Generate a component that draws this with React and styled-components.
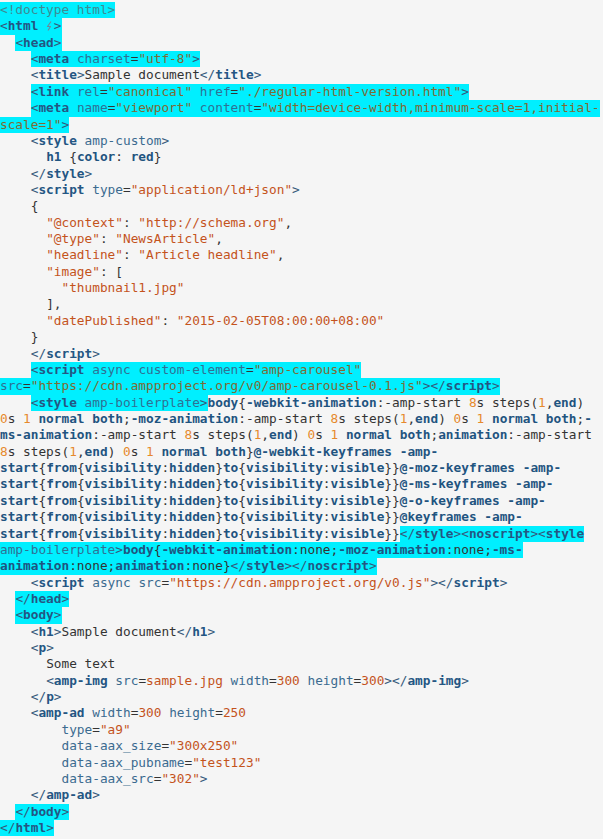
import React from 'react'
import styled, { createGlobalStyle } from 'styled-components'

const GlobalStyle = createGlobalStyle`
  html, body {
    margin: 0;
    padding: 0;
    background: #f5f5f5;
  }
`

const colors = {
    b: '#34597b',
    t: '#245683',
    a: '#3b6b90',
    v: '#c4531c',
    p: '#333333',
    k: '#1f5480',
    n: '#e6892c',
    d: '#4a8e97',
    i: '#6f8799'
}
const markColors = { ...colors, v: '#7f6a34', a: '#2f7194', d: '#3f8a93' }

const plainWords = new Set(['-amp-start', 'steps', 's', 'none'])

// split a run of css into coloured tokens
const css = (text, hl) =>
    text.match(/\d+|[@A-Za-z-][A-Za-z0-9-]*|[^@A-Za-z0-9-]+/g).map(w => {
        let type = 'k'
        if (/^\d+$/.test(w)) type = 'n'
        else if (!/^[@A-Za-z-]/.test(w) || plainWords.has(w)) type = 'p'
        return `${hl ? '!' : ''}${type}:${w}`
    })

const kf = 'start{from{visibility:hidden}to{visibility:visible}}'

const LINES = [
    [0, '!d:<!doctype html>'],
    [0, '!b:<', '!t:html', '!p: ', '!i:', '!b:>'],
    [2, '!b:<', '!t:head', '!b:>'],
    [4, '!b:<', '!t:meta', '!p: ', '!a:charset', '!p:=', '!v:"utf-8"', '!b:>'],
    [4, 'b:<', 't:title', 'b:>', 'p:Sample document', 'b:</', 't:title', 'b:>'],
    [4, '!b:<', '!t:link', '!p: ', '!a:rel', '!p:=', '!v:"canonical"', '!p: ', '!a:href', '!p:=', '!v:"./regular-html-version.html"', '!b:>'],
    [4, '!b:<', '!t:meta', '!p: ', '!a:name', '!p:=', '!v:"viewport"', '!p: ', '!a:content', '!p:=', '!v:"width=device-width,minimum-scale=1,initial-'],
    [0, '!v:scale=1"', '!b:>'],
    [4, 'b:<', 't:style', 'p: ', 'a:amp-custom', 'b:>'],
    [6, 'k:h1', 'p: {', 'k:color', 'p:: ', 'k:red', 'p:}'],
    [4, 'b:</', 't:style', 'b:>'],
    [4, 'b:<', 't:script', 'p: ', 'a:type', 'p:=', 'v:"application/ld+json"', 'b:>'],
    [4, 'p:{'],
    [6, 'v:"@context"', 'p:: ', 'v:"http://schema.org"', 'p:,'],
    [6, 'v:"@type"', 'p:: ', 'v:"NewsArticle"', 'p:,'],
    [6, 'v:"headline"', 'p:: ', 'v:"Article headline"', 'p:,'],
    [6, 'v:"image"', 'p:: ['],
    [8, 'v:"thumbnail1.jpg"'],
    [6, 'p:],'],
    [6, 'v:"datePublished"', 'p:: ', 'v:"2015-02-05T08:00:00+08:00"'],
    [4, 'p:}'],
    [4, 'b:</', 't:script', 'b:>'],
    [4, '!b:<', '!t:script', '!p: ', '!a:async', '!p: ', '!a:custom-element', '!p:=', '!v:"amp-carousel"'],
    [0, '!a:src', '!p:=', '!v:"https://cdn.ampproject.org/v0/amp-carousel-0.1.js"', '!b:></', '!t:script', '!b:>'],
    [4, '!b:<', '!t:style', '!p: ', '!a:amp-boilerplate', '!b:>', ...css('body{-webkit-animation:-amp-start 8s steps(1,end)')],
    [0, ...css('0s 1 normal both;-moz-animation:-amp-start 8s steps(1,end) 0s 1 normal both;-')],
    [0, ...css('ms-animation:-amp-start 8s steps(1,end) 0s 1 normal both;animation:-amp-start')],
    [0, ...css('8s steps(1,end) 0s 1 normal both}@-webkit-keyframes -amp-')],
    [0, ...css(kf + '@-moz-keyframes -amp-')],
    [0, ...css(kf + '@-ms-keyframes -amp-')],
    [0, ...css(kf + '@-o-keyframes -amp-')],
    [0, ...css(kf + '@keyframes -amp-')],
    [0, ...css(kf), '!b:</', '!t:style', '!b:><', '!t:noscript', '!b:><', '!t:style'],
    [0, '!a:amp-boilerplate', '!b:>', ...css('body{-webkit-animation:none;-moz-animation:none;-ms-', true)],
    [0, ...css('animation:none;animation:none}', true), '!b:</', '!t:style', '!b:></', '!t:noscript', '!b:>'],
    [4, 'b:<', 't:script', 'p: ', 'a:async', 'p: ', 'a:src', 'p:=', 'v:"https://cdn.ampproject.org/v0.js"', 'b:></', 't:script', 'b:>'],
    [2, '!b:</', '!t:head', '!b:>'],
    [2, '!b:<', '!t:body', '!b:>'],
    [4, 'b:<', 't:h1', 'b:>', 'p:Sample document', 'b:</', 't:h1', 'b:>'],
    [4, 'b:<', 't:p', 'b:>'],
    [6, 'p:Some text'],
    [6, 'b:<', 't:amp-img', 'p: ', 'a:src', 'p:=', 'v:sample.jpg', 'p: ', 'a:width', 'p:=', 'v:300', 'p: ', 'a:height', 'p:=', 'v:300', 'b:></', 't:amp-img', 'b:>'],
    [4, 'b:</', 't:p', 'b:>'],
    [4, 'b:<', 't:amp-ad', 'p: ', 'a:width', 'p:=', 'v:300', 'p: ', 'a:height', 'p:=', 'v:250'],
    [8, 'a:type', 'p:=', 'v:"a9"'],
    [8, 'a:data-aax_size', 'p:=', 'v:"300x250"'],
    [8, 'a:data-aax_pubname', 'p:=', 'v:"test123"'],
    [8, 'a:data-aax_src', 'p:=', 'v:"302"', 'b:>'],
    [4, 'b:</', 't:amp-ad', 'b:>'],
    [2, '!b:</', '!t:body', '!b:>'],
    [0, '!b:</', '!t:html', '!b:>']
]

const Page = styled.div`
    background: #f5f5f5;
    min-height: 100vh;
    padding-top: 2px;
    box-sizing: border-box;
    font-family: "DejaVu Sans Mono", "Liberation Mono", monospace;
    font-size: 12.77px;
`

const Line = styled.div`
    height: 16.36px;
    line-height: 16.36px;
    white-space: pre;
    color: #333333;
`

const Mark = styled.span`
    display: inline-block;
    height: 16.36px;
    vertical-align: top;
    background: #00efff;
`

const Tok = styled.span`
    color: ${p => (p.$hl ? markColors : colors)[p.$type]};
    font-weight: ${p => (p.$type === 't' || p.$type === 'k' ? 700 : 400)};
`

const BoltBox = styled.span`
    display: inline-block;
    width: 7.69px;
    text-align: center;
    svg {
        vertical-align: -1px;
    }
`

const Bolt = () => (
    <BoltBox>
        <svg width="7" height="10" viewBox="0 0 7 10">
            <path d="M5 0.5 L1.5 5.5 H4.5 L2 9.5" fill="none" stroke={colors.i} strokeWidth="1.1" strokeLinejoin="round" />
        </svg>
    </BoltBox>
)

const renderTok = ([type, text], hl, key) =>
    type === 'i' ? <Bolt key={key} /> : <Tok key={key} $type={type} $hl={hl}>{text}</Tok>

const CodeLine = ({ indent, toks }) => {
    const groups = []
    toks.forEach(s => {
        const hl = s[0] === '!'
        const item = [s[hl ? 1 : 0], s.slice(hl ? 3 : 2)]
        const last = groups[groups.length - 1]
        if (last && last.hl === hl) last.items.push(item)
        else groups.push({ hl, items: [item] })
    })

    return (
        <Line>
            {' '.repeat(indent)}
            {groups.map((g, gi) =>
                g.hl ? (
                    <Mark key={gi}>{g.items.map((it, i) => renderTok(it, true, i))}</Mark>
                ) : (
                    <React.Fragment key={gi}>{g.items.map((it, i) => renderTok(it, false, i))}</React.Fragment>
                )
            )}
        </Line>
    )
}

const App = () => {
    return (
        <Page>
            <GlobalStyle />
            {LINES.map(([indent, ...toks], i) => (
                <CodeLine key={i} indent={indent} toks={toks} />
            ))}
        </Page>
    )
}

export default App
